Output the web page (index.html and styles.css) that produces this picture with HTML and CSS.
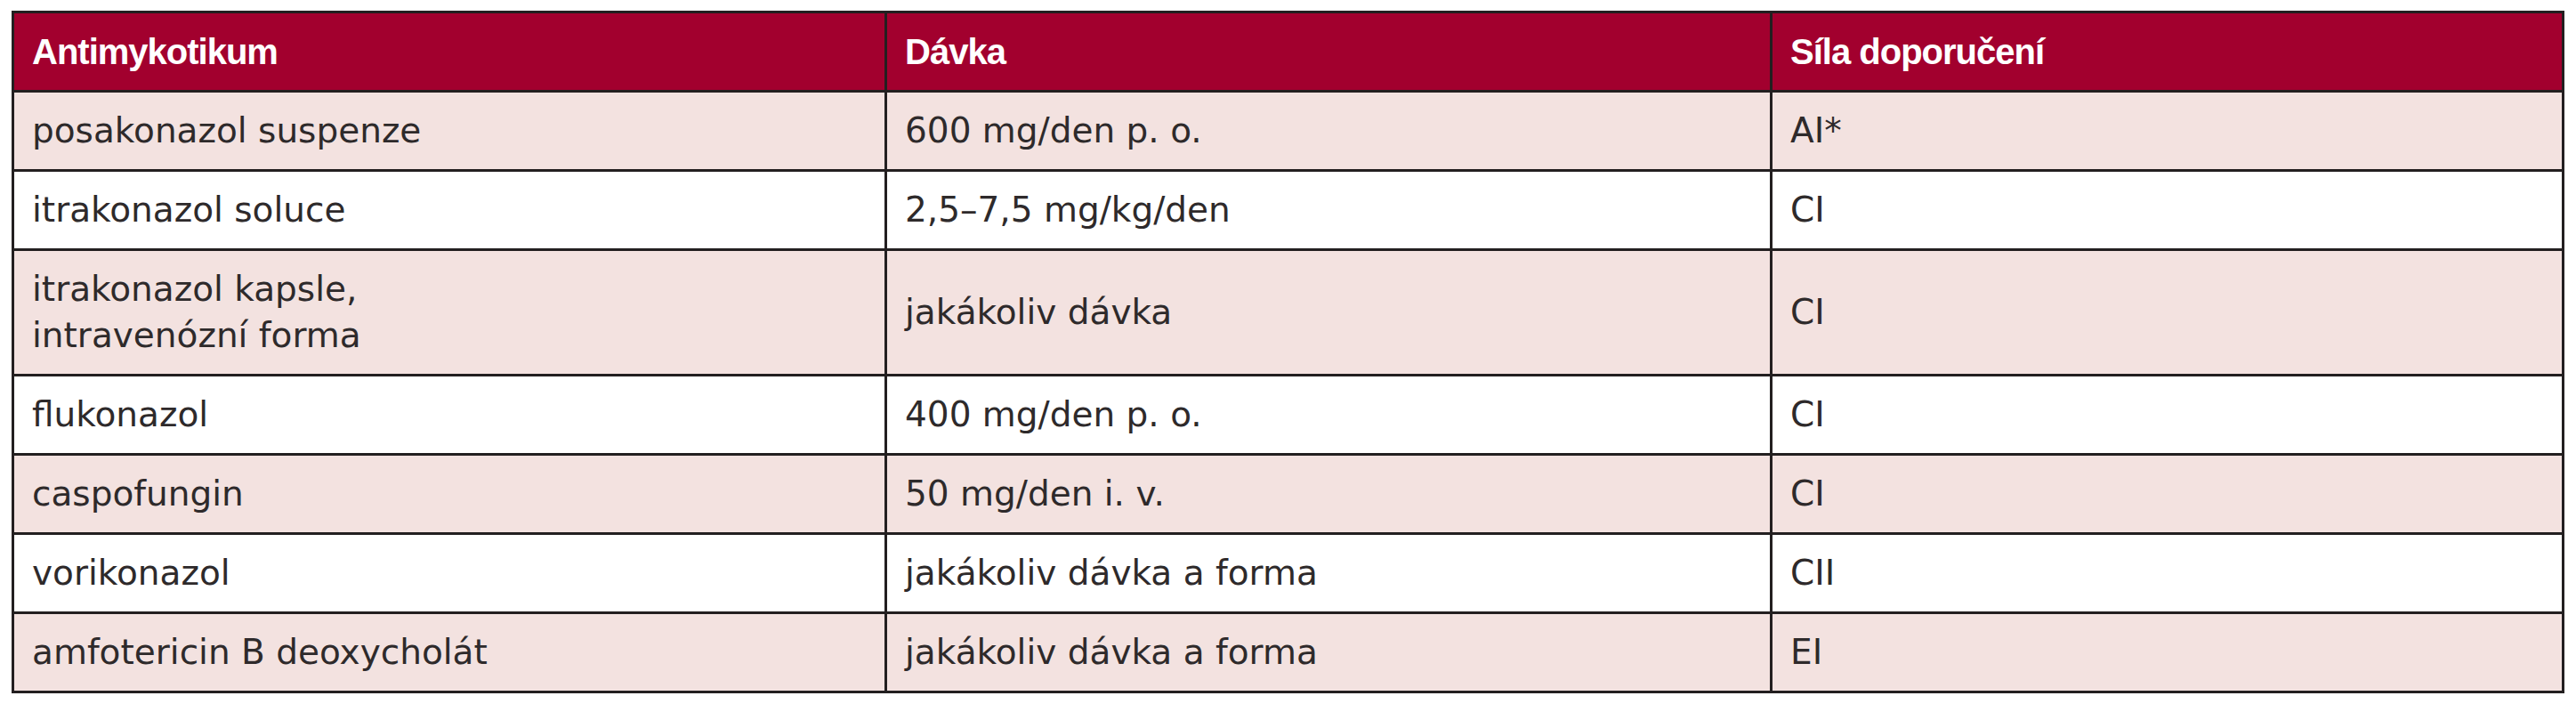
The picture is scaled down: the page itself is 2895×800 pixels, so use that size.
FILE: index.html
```html
<!DOCTYPE html>
<html lang="cs">
<head>
<meta charset="utf-8">
<title>Antimykotika</title>
<link rel="stylesheet" href="styles.css">
</head>
<body>
<div class="wrap">
<table class="grid">
<colgroup>
<col class="c1">
<col class="c2">
<col class="c3">
</colgroup>
<thead>
<tr class="head">
<th>Antimykotikum</th>
<th>Dávka</th>
<th>Síla doporučení</th>
</tr>
</thead>
<tbody>
<tr class="pink"><td>posakonazol suspenze</td><td>600 mg/den p. o.</td><td>AI*</td></tr>
<tr class="white"><td>itrakonazol soluce</td><td>2,5–7,5 mg/kg/den</td><td>CI</td></tr>
<tr class="pink"><td>itrakonazol kapsle,<br>intravenózní forma</td><td>jakákoliv dávka</td><td>CI</td></tr>
<tr class="white"><td>flukonazol</td><td>400 mg/den p. o.</td><td>CI</td></tr>
<tr class="pink"><td>caspofungin</td><td>50 mg/den i. v.</td><td>CI</td></tr>
<tr class="white"><td>vorikonazol</td><td>jakákoliv dávka a forma</td><td>CII</td></tr>
<tr class="pink"><td>amfotericin B deoxycholát</td><td>jakákoliv dávka a forma</td><td>EI</td></tr>
</tbody>
</table>
</div>
</body>
</html>
```

FILE: styles.css
```css
html, body {
  margin: 0;
  padding: 0;
  background: #ffffff;
}

.wrap {
  padding: 12px 0 0 13px;
}

.grid {
  width: 2866px;
  border-collapse: collapse;
  table-layout: fixed;
  font-family: "DejaVu Sans", "Liberation Sans", sans-serif;
  font-size: 39px;
  color: #2e2a2b;
}

.c1 { width: 981px; }
.c2 { width: 995px; }
.c3 { width: 890px; }

.grid th,
.grid td {
  border: 3px solid #231f20;
  padding: 17px 20px;
  line-height: 52px;
  text-align: left;
  vertical-align: middle;
}

.head th {
  background: #a2002e;
  color: #ffffff;
  font-family: "Liberation Sans", "DejaVu Sans", sans-serif;
  font-weight: bold;
  font-size: 40px;
  letter-spacing: -1px;
}

.pink td {
  background: #f3e2e0;
}

.white td {
  background: #ffffff;
}
```
